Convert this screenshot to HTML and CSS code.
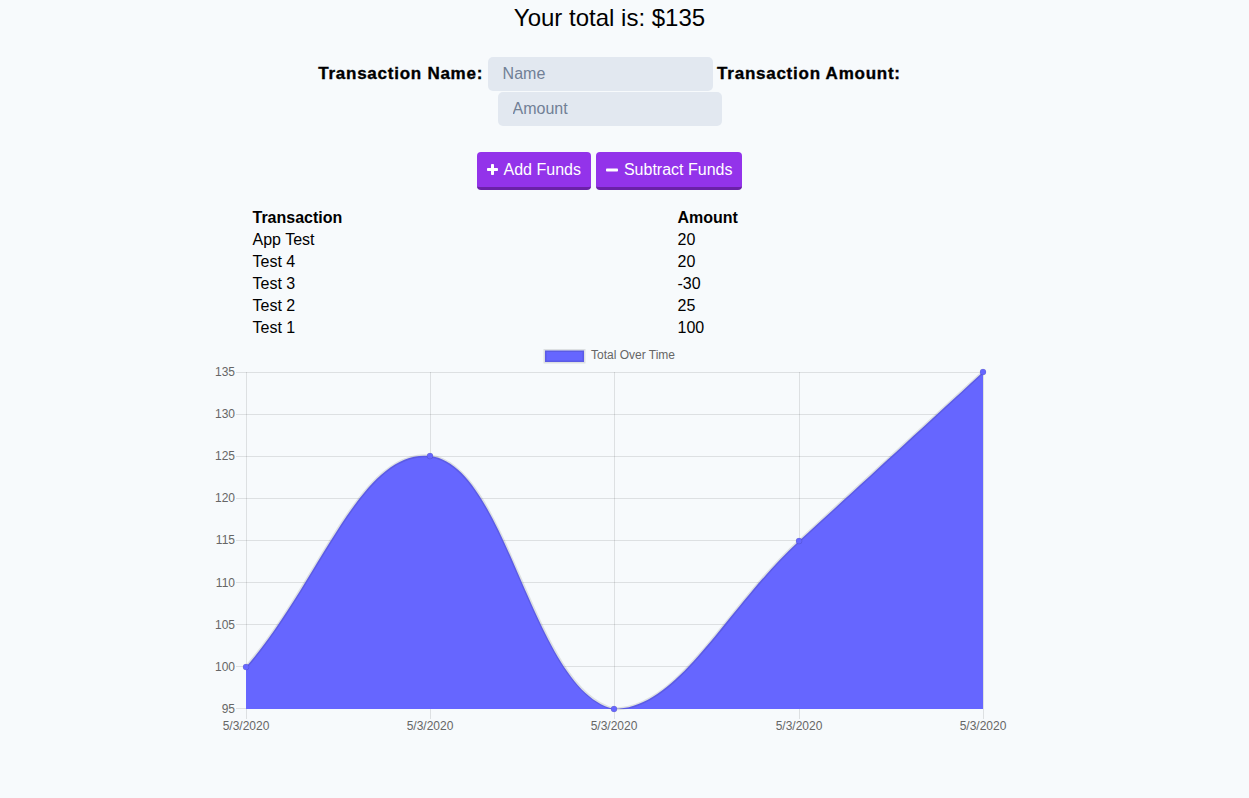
FILE: index.html
```html
<!DOCTYPE html>
<html>
<head>
<meta charset="utf-8">
<title>Budget Tracker</title>
<link rel="stylesheet" href="styles.css">
</head>
<body>
<div class="page">
  <h1 class="total">Your total is: $<span>135</span></h1>

  <form class="form">
    <label class="label" for="t-name">Transaction Name:</label>
    <input class="field field-name" id="t-name" type="text" placeholder="Name">
    <label class="label" for="t-amount">Transaction Amount:</label>
    <input class="field field-amount" id="t-amount" type="number" placeholder="Amount">
  </form>

  <div class="actions">
    <button class="btn" type="button">
      <svg class="icon" width="11" height="11" viewBox="0 0 11 11"><rect x="4" y="0" width="3" height="11" rx="0.8" fill="#fff"/><rect x="0" y="4" width="11" height="3" rx="0.8" fill="#fff"/></svg>
      <span>Add Funds</span>
    </button>
    <button class="btn" type="button">
      <svg class="icon" width="12" height="4" viewBox="0 0 12 4"><rect x="0" y="0.5" width="12" height="3" rx="0.8" fill="#fff"/></svg>
      <span>Subtract Funds</span>
    </button>
  </div>

  <table class="table">
    <colgroup><col class="col-name"><col class="col-amount"></colgroup>
    <thead>
      <tr><th>Transaction</th><th>Amount</th></tr>
    </thead>
    <tbody>
      <tr><td>App Test</td><td>20</td></tr>
      <tr><td>Test 4</td><td>20</td></tr>
      <tr><td>Test 3</td><td>-30</td></tr>
      <tr><td>Test 2</td><td>25</td></tr>
      <tr><td>Test 1</td><td>100</td></tr>
    </tbody>
  </table>

  <div class="chart-wrap">
    <svg class="chart" width="800" height="400" viewBox="209 345 800 400" xmlns="http://www.w3.org/2000/svg">
      <!-- legend -->
      <rect x="544" y="350.5" width="39" height="11.5" fill="#6666ff" stroke="rgba(0,0,0,0.1)" stroke-width="3"/>
      <text class="tick" x="590" y="359">Total Over Time</text>

      <!-- horizontal grid -->
      <g stroke="rgba(0,0,0,0.1)" stroke-width="1">
        <line x1="235" y1="372.5" x2="982" y2="372.5"/>
        <line x1="235" y1="414.5" x2="982" y2="414.5"/>
        <line x1="235" y1="456.5" x2="982" y2="456.5"/>
        <line x1="235" y1="498.5" x2="982" y2="498.5"/>
        <line x1="235" y1="540.5" x2="982" y2="540.5"/>
        <line x1="235" y1="582.5" x2="982" y2="582.5"/>
        <line x1="235" y1="624.5" x2="982" y2="624.5"/>
        <line x1="235" y1="666.5" x2="982" y2="666.5"/>
        <line x1="235" y1="708.5" x2="982" y2="708.5"/>
        <!-- vertical grid -->
        <line x1="245.5" y1="372" x2="245.5" y2="719"/>
        <line x1="429.5" y1="372" x2="429.5" y2="719"/>
        <line x1="613.5" y1="372" x2="613.5" y2="719"/>
        <line x1="798.5" y1="372" x2="798.5" y2="719"/>
        <line x1="982.5" y1="372" x2="982.5" y2="719"/>
      </g>

      <!-- y labels -->
      <g class="tick" text-anchor="end">
        <text x="234" y="376">135</text>
        <text x="234" y="418">130</text>
        <text x="234" y="460">125</text>
        <text x="234" y="502">120</text>
        <text x="234" y="544">115</text>
        <text x="234" y="587">110</text>
        <text x="234" y="629">105</text>
        <text x="234" y="671">100</text>
        <text x="234" y="713">95</text>
      </g>

      <!-- x labels -->
      <g class="tick" text-anchor="middle">
        <text x="245" y="730">5/3/2020</text>
        <text x="429" y="730">5/3/2020</text>
        <text x="613" y="730">5/3/2020</text>
        <text x="798" y="730">5/3/2020</text>
        <text x="982" y="730">5/3/2020</text>
      </g>

      <!-- area -->
      <path d="M245,667 C318.6,582.6 359.5,448.1 429,456 C506.7,464.9 530.9,690.1 613,709 C678.5,709 724.2,608.4 798,541 C871.8,473.6 908.4,439.6 982,372 L982,709 L245,709 Z" fill="#6666ff"/>
      <path d="M245,667 C318.6,582.6 359.5,448.1 429,456 C506.7,464.9 530.9,690.1 613,709 C678.5,709 724.2,608.4 798,541 C871.8,473.6 908.4,439.6 982,372" fill="none" stroke="rgba(0,0,0,0.1)" stroke-width="3"/>

      <!-- points -->
      <g fill="#6666ff" stroke="rgba(0,0,0,0.1)" stroke-width="1">
        <circle cx="245" cy="667" r="3"/>
        <circle cx="429" cy="456" r="3"/>
        <circle cx="613" cy="709" r="3"/>
        <circle cx="798" cy="541" r="3"/>
        <circle cx="982" cy="372" r="3"/>
      </g>
    </svg>
  </div>
</div>
</body>
</html>
```

FILE: styles.css
```css
* { box-sizing: border-box; }

html, body {
  margin: 0;
  padding: 0;
  background: #f7fafc;
}

body {
  font-family: "Liberation Sans", Arial, Helvetica, sans-serif;
  color: #000;
}

.page {
  width: 1219px;
  display: flex;
  flex-direction: column;
  align-items: center;
}

.total {
  margin: 0;
  padding-top: 4px;
  font-size: 24px;
  font-weight: normal;
  line-height: 28px;
}

.form {
  margin-top: 25px;
  width: 620px;
  display: flex;
  flex-wrap: wrap;
  justify-content: center;
  align-items: center;
  column-gap: 4.5px;
  row-gap: 1px;
}

.label {
  font-size: 17px;
  font-weight: bold;
  line-height: 18px;
  letter-spacing: 0.75px;
  -webkit-text-stroke: 0.35px #000;
}

.field {
  height: 34px;
  width: 225px;
  border: none;
  border-radius: 5px;
  background: #e2e8f0;
  padding: 0 15px;
  font-family: "Liberation Sans", Arial, sans-serif;
  font-size: 16px;
  color: #2d3748;
  outline: none;
}

.field::placeholder { color: #718096; }

.field-amount { width: 224px; }

.field::-webkit-outer-spin-button,
.field::-webkit-inner-spin-button { -webkit-appearance: none; margin: 0; }

.actions {
  margin-top: 26px;
  display: flex;
  gap: 5px;
}

.btn {
  height: 38px;
  display: flex;
  align-items: center;
  gap: 6px;
  padding: 0 10px;
  border: none;
  border-bottom: 3px solid #6b21a8;
  border-radius: 4px;
  background: #9333ea;
  color: #fff;
  font-family: "Liberation Sans", Arial, sans-serif;
  font-size: 16px;
  line-height: 18px;
  cursor: pointer;
}

.icon { display: block; flex: none; }

.table {
  margin-top: 17px;
  width: 716px;
  border-collapse: separate;
  border-spacing: 0;
  table-layout: fixed;
  font-size: 16px;
  line-height: 18px;
}

.col-name { width: 425px; }

.table th,
.table td {
  padding: 2px 1px;
  text-align: left;
  vertical-align: top;
}

.table th { font-weight: bold; }

.chart-wrap {
  margin-top: 6px;
  width: 800px;
  height: 400px;
}

.chart { display: block; }

.tick {
  font-family: "Liberation Sans", Arial, sans-serif;
  font-size: 12px;
  fill: #666;
}
```
